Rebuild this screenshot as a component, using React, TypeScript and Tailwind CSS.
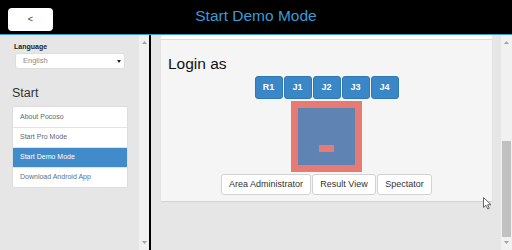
const FONT = { fontFamily: '"Liberation Sans", Arial, sans-serif' }

function ScrollArrow({ up }: { up?: boolean }) {
  return (
    <svg width="5" height="3" viewBox="0 0 5 3" className="block">
      <polygon points={up ? '0,3 5,3 2.5,0' : '0,0 5,0 2.5,3'} fill="#a3a3a3" />
    </svg>
  )
}

function Scrollbar({ width, thumb }: { width: string; thumb?: boolean }) {
  return (
    <div className={`${width} flex flex-col items-center bg-[#f1f1f1] py-[6px]`}>
      <ScrollArrow up />
      <div className="flex-1 w-full flex flex-col justify-end px-[1px] pb-[4px]">
        {thumb && <div className="h-[96px] w-full bg-[#c1c1c1]" />}
      </div>
      <ScrollArrow />
    </div>
  )
}

const menu = ['About Pocoso', 'Start Pro Mode', 'Start Demo Mode', 'Download Android App']
const roles = ['R1', 'J1', 'J2', 'J3', 'J4']

export default function App() {
  return (
    <div className="w-[512px] h-[250px] overflow-hidden flex flex-col bg-[#e6e6e6] relative" style={FONT}>
      {/* top bar */}
      <header className="h-[35px] shrink-0 bg-black border-b border-[#3a9bd5] grid grid-cols-[1fr_auto_1fr] items-start">
        <div className="pl-[8px] pt-[5px]">
          <button className="w-[45px] h-[23px] bg-white rounded-[4px] text-[9px] text-[#333] leading-none">&lt;</button>
        </div>
        <h1 className="text-[15.5px] leading-[20px] pt-[6px] text-[#3a9bd5]">Start Demo Mode</h1>
        <div />
      </header>

      <div className="flex-1 flex min-h-0">
        {/* sidebar */}
        <aside className="w-[139px] pl-[12px] pr-[11px] pt-[6px]">
          <div className="pl-[2px] text-[7px] leading-[11px] font-bold text-[#222]">Language</div>
          <div className="mt-[1px] ml-[3px] h-[16px] w-[110px] bg-white rounded-[3px] border border-[#dedede] flex items-center justify-between pl-[7px] pr-[3px]">
            <span className="text-[7.5px] text-[#8a8a8a]">English</span>
            <svg width="4" height="3" viewBox="0 0 4 3">
              <polygon points="0,0 4,0 2,3" fill="#222" />
            </svg>
          </div>
          <div className="mt-[16px] text-[12.5px] leading-[17px] text-[#333]">Start</div>
          <ul className="mt-[4px] w-[116px] bg-white border border-[#ddd] rounded-[2px]">
            {menu.map((m, i) => (
              <li
                key={m}
                className={`h-[20px] flex items-center pl-[7px] text-[7px] ${
                  i > 0 ? 'border-t border-[#e3e3e3]' : ''
                } ${i === 2 ? 'bg-[#428bca] text-white' : i === 3 ? 'text-[#607080]' : 'text-[#666]'}`}
              >
                {m}
              </li>
            ))}
          </ul>
        </aside>
        <Scrollbar width="w-[10px]" />
        <div className="w-[2px] bg-black" />

        {/* main */}
        <main className="flex-1 pl-[10px] pr-[9px]">
          <div className="h-[4px] bg-white" />
          <section className="bg-[#f5f5f5] border-t border-[#dcdcdc] shadow-[0_1px_1px_rgba(0,0,0,0.08)] pt-[14px] pb-[6px] px-[7px] flex flex-col">
            <h2 className="text-[15.5px] leading-[20px] text-[#111]">Login as</h2>
            <div className="mt-[2px] flex justify-center gap-[1px]">
              {roles.map((r) => (
                <button
                  key={r}
                  className="w-[28px] h-[23px] rounded-[3px] bg-[#3a87c8] border border-[#2f78b6] text-white text-[9px] font-bold"
                >
                  {r}
                </button>
              ))}
            </div>
            <div className="mt-[2px] self-center w-[71px] h-[71px] bg-[#e87a74] p-[7px]">
              <div className="w-full h-full bg-[#5f84b4] flex items-end justify-center pb-[13px]">
                <div className="w-[15px] h-[7px] bg-[#e87a74]" />
              </div>
            </div>
            <div className="mt-[2px] flex justify-center gap-[1px]">
              {[
                ['Area Administrator', 'w-[90px]'],
                ['Result View', 'w-[64px]'],
                ['Spectator', 'w-[55px]'],
              ].map(([t, w]) => (
                <button
                  key={t}
                  className={`${w} h-[21px] bg-white border border-[#d2d2d2] rounded-[3px] text-[9px] text-[#333]`}
                >
                  {t}
                </button>
              ))}
            </div>
          </section>
        </main>
        <Scrollbar width="w-[11px]" thumb />
      </div>

      {/* mouse pointer */}
      <svg className="absolute left-[483px] top-[197px]" width="9" height="13" viewBox="0 0 9 13">
        <path d="M0.5 0.5 L0.5 10.5 L3 8.3 L4.8 12 L6.3 11.3 L4.6 7.7 L8 7.7 Z" fill="#fff" stroke="#666" strokeWidth="1" />
      </svg>
    </div>
  )
}
